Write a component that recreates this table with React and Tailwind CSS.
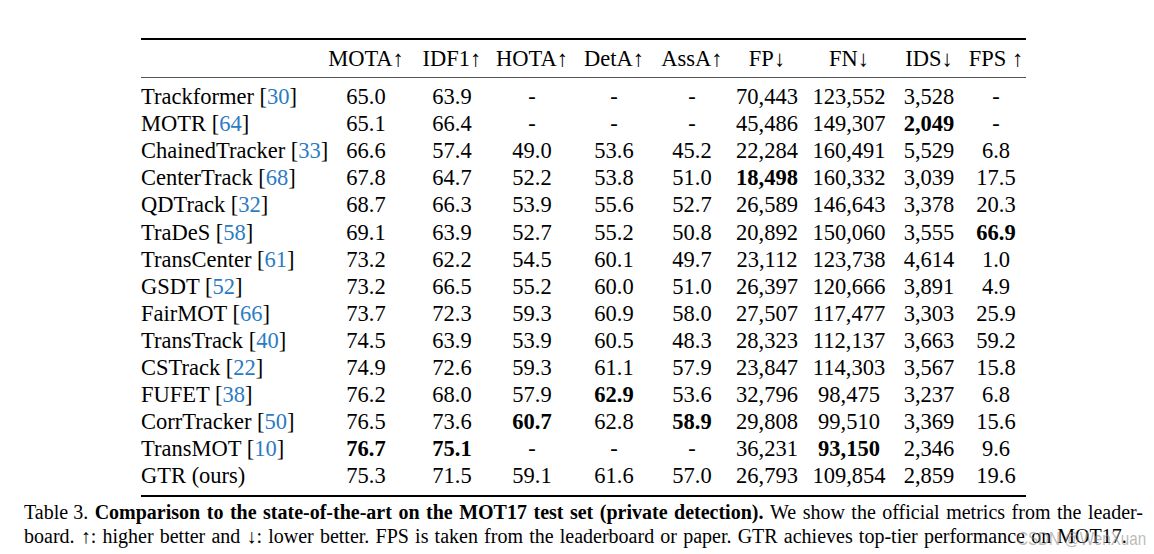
import React from 'react';

const cols = ['w-[179px] text-left', 'w-[92px]', 'w-[80px]', 'w-[80px]', 'w-[84px]', 'w-[72px]', 'w-[78px]', 'w-[86px]', 'w-[74px]', 'w-[60px]'];

const headers = ['', 'MOTA↑', 'IDF1↑', 'HOTA↑', 'DetA↑', 'AssA↑', 'FP↓', 'FN↓', 'IDS↓', 'FPS ↑'];

// bold cells are prefixed with *
const rows = [
  ['Trackformer', '30', '65.0', '63.9', '-', '-', '-', '70,443', '123,552', '3,528', '-'],
  ['MOTR', '64', '65.1', '66.4', '-', '-', '-', '45,486', '149,307', '*2,049', '-'],
  ['ChainedTracker', '33', '66.6', '57.4', '49.0', '53.6', '45.2', '22,284', '160,491', '5,529', '6.8'],
  ['CenterTrack', '68', '67.8', '64.7', '52.2', '53.8', '51.0', '*18,498', '160,332', '3,039', '17.5'],
  ['QDTrack', '32', '68.7', '66.3', '53.9', '55.6', '52.7', '26,589', '146,643', '3,378', '20.3'],
  ['TraDeS', '58', '69.1', '63.9', '52.7', '55.2', '50.8', '20,892', '150,060', '3,555', '*66.9'],
  ['TransCenter', '61', '73.2', '62.2', '54.5', '60.1', '49.7', '23,112', '123,738', '4,614', '1.0'],
  ['GSDT', '52', '73.2', '66.5', '55.2', '60.0', '51.0', '26,397', '120,666', '3,891', '4.9'],
  ['FairMOT', '66', '73.7', '72.3', '59.3', '60.9', '58.0', '27,507', '117,477', '3,303', '25.9'],
  ['TransTrack', '40', '74.5', '63.9', '53.9', '60.5', '48.3', '28,323', '112,137', '3,663', '59.2'],
  ['CSTrack', '22', '74.9', '72.6', '59.3', '61.1', '57.9', '23,847', '114,303', '3,567', '15.8'],
  ['FUFET', '38', '76.2', '68.0', '57.9', '*62.9', '53.6', '32,796', '98,475', '3,237', '6.8'],
  ['CorrTracker', '50', '76.5', '73.6', '*60.7', '62.8', '*58.9', '29,808', '99,510', '3,369', '15.6'],
  ['TransMOT', '10', '*76.7', '*75.1', '-', '-', '-', '36,231', '*93,150', '2,346', '9.6'],
  ['GTR (ours)', '', '75.3', '71.5', '59.1', '61.6', '57.0', '26,793', '109,854', '2,859', '19.6'],
];

const line1 = [
  ['Table 3.', false], ['Comparison', true], ['to', true], ['the', true], ['state-of-the-art', true],
  ['on', true], ['the', true], ['MOT17', true], ['test', true], ['set', true], ['(private', true],
  ['detection).', true], ['We', false], ['show', false], ['the', false], ['official', false],
  ['metrics', false], ['from', false], ['the', false], ['leader-', false],
];

const line2 = 'board. ↑: higher better and ↓: lower better. FPS is taken from the leaderboard or paper. GTR achieves top-tier performance on MOT17.'.split(' ');

function Cell({ value, i }) {
  const bold = value.startsWith('*');
  const text = bold ? value.slice(1) : value;
  return <div className={`${cols[i]} text-center ${bold ? 'font-bold' : ''}`}>{text}</div>;
}

export default function App() {
  return (
    <div
      className="w-[1154px] h-[554px] bg-white text-black relative overflow-hidden"
      style={{ fontFamily: '"Liberation Serif", "Times New Roman", serif' }}
    >
      <div className="pt-[38px] pl-[141px]">
        <div className="w-[885px] text-[22.5px]">
          <div className="border-t-2 border-black" />
          <div className="flex h-[37px] items-center">
            {headers.map((h, i) => (
              <div key={i} className={`${cols[i]} text-center whitespace-nowrap`}>{h}</div>
            ))}
          </div>
          <div className="border-t border-[#555]" />
          <div className="pt-[5px] pb-[6px]">
            {rows.map((r, k) => (
              <div key={k} className="flex h-[27.1px] leading-[27px] items-center whitespace-nowrap">
                <div className={cols[0]}>
                  {r[0]}
                  {r[1] && (
                    <>
                      {' '}[<span className="text-[#2b7bc4]">{r[1]}</span>]
                    </>
                  )}
                </div>
                {r.slice(2).map((v, j) => (
                  <Cell key={j} value={v} i={j + 1} />
                ))}
              </div>
            ))}
          </div>
          <div className="border-t-2 border-black" />
        </div>
      </div>

      <div className="pl-[24px] pr-[11px] pt-[3px] text-[20px] leading-[24px]">
        <div className="whitespace-nowrap flex justify-between">
          {line1.map(([w, b], i) => (
            <span key={i} className={b ? 'font-bold' : ''}>{w}</span>
          ))}
        </div>
        <div className="whitespace-nowrap flex justify-between pr-[16px]">
          {line2.map((w, i) => (
            <span key={i}>{w}</span>
          ))}
        </div>
      </div>

      <div
        className="absolute left-[1017px] top-[525px] text-[19px] text-[#8c8c8c]/60 whitespace-nowrap scale-x-[0.8] origin-left"
        style={{ fontFamily: '"Liberation Sans", Arial, sans-serif' }}
      >
        CSDN @WenXuan
      </div>
    </div>
  );
}
